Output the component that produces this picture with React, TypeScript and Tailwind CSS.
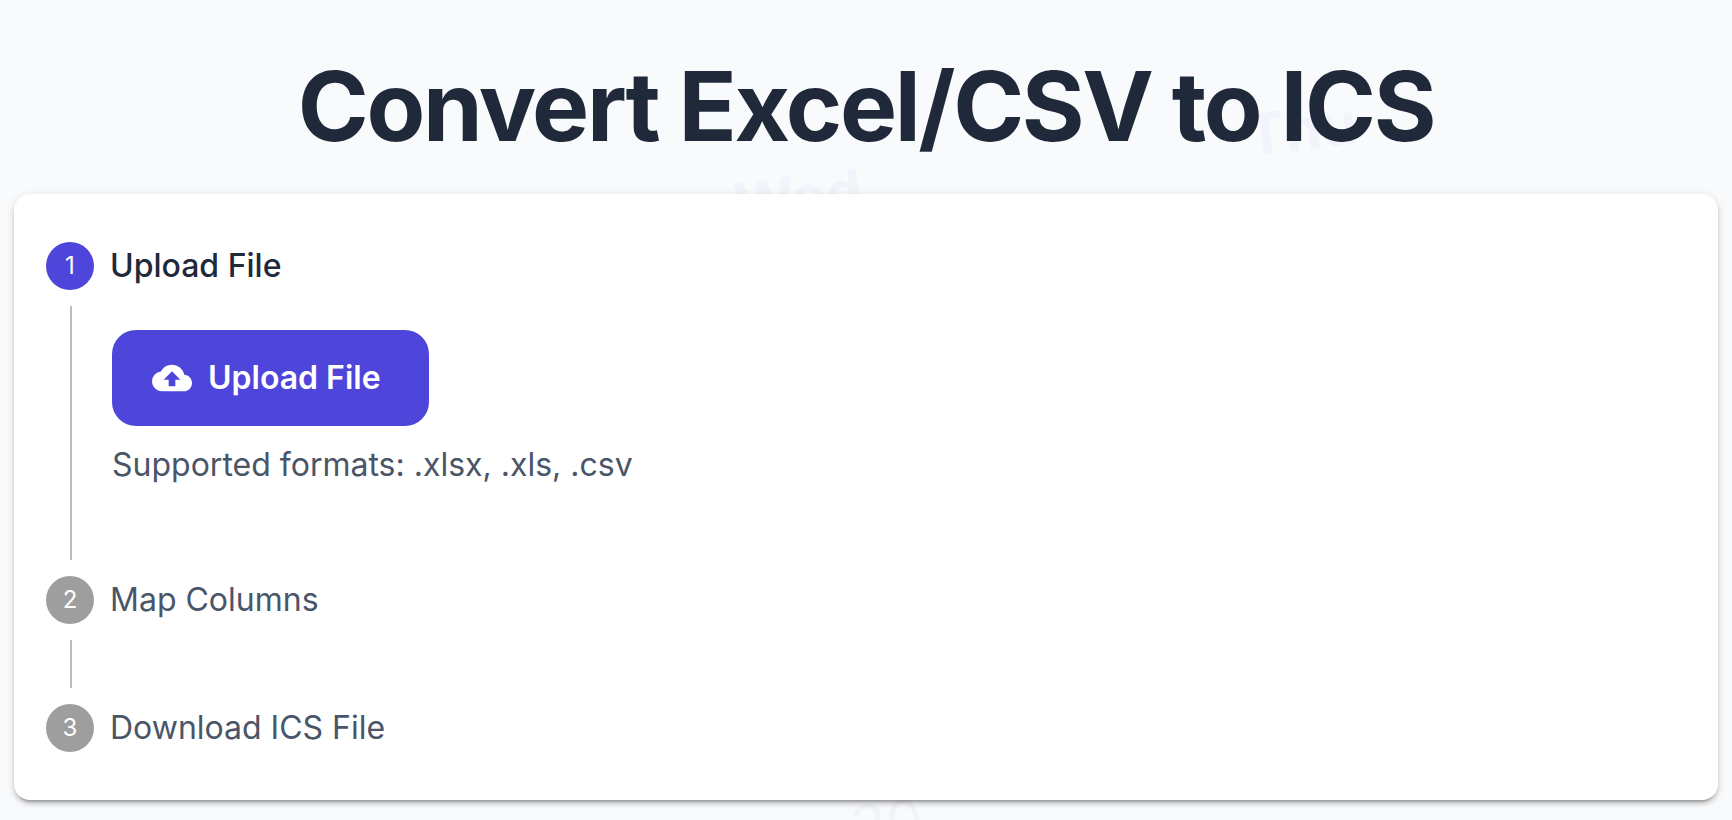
import type { ReactNode } from 'react'
import { MdCloudUpload } from 'react-icons/md'

interface StepProps {
  number: number
  label: string
  active?: boolean
  last?: boolean
  children?: ReactNode
}

function Step({ number, label, active, last, children }: StepProps) {
  return (
    <li aria-current={active ? 'step' : undefined}>
      <div className="flex items-center gap-4 py-4">
        <span
          className={
            active
              ? 'flex h-12 w-12 items-center justify-center rounded-full bg-[#4e45db] text-2xl text-white'
              : 'flex h-12 w-12 items-center justify-center rounded-full bg-[#9e9e9e] text-2xl text-white'
          }
        >
          {number}
        </span>
        <span className={active ? 'text-[32px] leading-[46px] font-medium text-[#1f293a]' : 'text-[32px] leading-[46px] text-[#4a5568]'}>
          {label}
        </span>
      </div>
      {!last && <div className="ml-6 min-h-12 border-l-2 border-[#bdbdbd] pl-10">{children}</div>}
    </li>
  )
}

// Faint calendar words behind the content
function Backdrop() {
  return (
    <div aria-hidden="true" className="pointer-events-none absolute inset-0 overflow-hidden">
      <span className="absolute top-[154px] left-[734px] -rotate-7 text-[58px] font-bold text-[#4e45db]/4">Wed</span>
      <span className="absolute top-[86px] left-[1246px] -rotate-7 text-[58px] font-bold text-[#4e45db]/3">Thu</span>
      <span className="absolute top-[780px] left-[851px] -rotate-7 text-[58px] text-gray-800/3">20</span>
    </div>
  )
}

export default function App() {
  return (
    <div className="relative min-h-screen bg-[#f9fafc] font-['Inter',sans-serif]">
      <Backdrop />
      <main className="relative px-3.5 pt-12 pb-5">
        <h1 className="mb-[30px] text-center text-8xl leading-[116px] font-bold tracking-tight text-[#1f293a]">
          Convert Excel/CSV to ICS
        </h1>

        <section className="rounded-2xl bg-white p-8 shadow-[0_6px_2px_-4px_rgba(0,0,0,0.2),0_4px_4px_0_rgba(0,0,0,0.14),0_2px_10px_0_rgba(0,0,0,0.12)]">
          <ol>
            <Step number={1} label="Upload File" active>
              <div className="pt-6 pb-18">
                <button
                  type="button"
                  className="flex items-center gap-4 rounded-3xl bg-[#4e45db] py-6 pr-12 pl-10 text-[32px] leading-[48px] font-semibold text-white"
                >
                  <MdCloudUpload className="h-10 w-10" />
                  Upload File
                </button>
                <p className="mt-4 text-[32px] leading-[46px] text-[#4a5568]">Supported formats: .xlsx, .xls, .csv</p>
              </div>
            </Step>
            <Step number={2} label="Map Columns" />
            <Step number={3} label="Download ICS File" last />
          </ol>
        </section>
      </main>
    </div>
  )
}
